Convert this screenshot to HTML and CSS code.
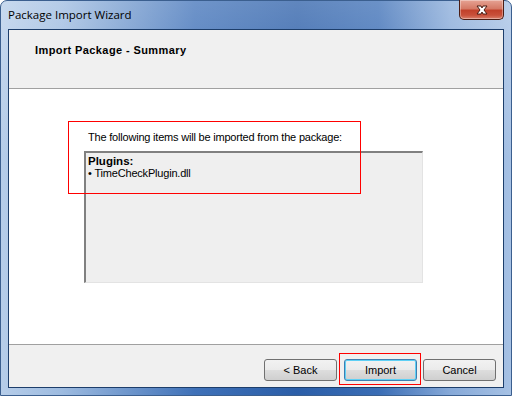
FILE: index.html
```html
<!DOCTYPE html>
<html>
  <head>
    <title>Package Import Wizard</title>
    <link rel="stylesheet" href="styles.css">
  </head>
  <body>
    <div class="window">
      <div class="title-bar">
        <span class="title-text">Package Import Wizard</span>
        <button class="close-button">
          <svg width="16" height="10" viewBox="0 0 16 10">
            <path d="M3 1 L7 1 L8 3 L9 1 L13 1 L10 5 L13 9 L9 9 L8 7 L7 9 L3 9 L6 5 Z" fill="#ffffff" stroke="#4a1a10" stroke-width="1"/>
          </svg>
        </button>
      </div>

      <div class="client">
        <div class="header">
          <p class="header-title">Import Package - Summary</p>
        </div>

        <div class="content">
          <p class="intro">The following items will be imported from the package:</p>
          <div class="list-box">
            <p class="list-group">Plugins:</p>
            <p class="list-item">&bull;&nbsp;TimeCheckPlugin.dll</p>
          </div>
          <div class="highlight highlight-list"></div>
        </div>

        <div class="footer">
          <button class="wizard-button side-button">&lt; Back</button>
          <div class="import-wrap">
            <button class="wizard-button default-button">Import</button>
          </div>
          <button class="wizard-button side-button">Cancel</button>
        </div>
      </div>
    </div>
  </body>
</html>
```

FILE: styles.css
```css
body {
    margin: 0;
    background-color: #ffffff;
    font-family: "Liberation Sans", Arial, sans-serif;
}

p {
    margin: 0;
}

.window {
    width: 512px;
    height: 396px;
    border-radius: 7px 7px 0 0;
    background:
        linear-gradient(to bottom, rgba(255, 255, 255, 0.25), rgba(255, 255, 255, 0) 40%),
        linear-gradient(to right, #b6cde9 0%, #9dbbe0 12%, #3f71b8 38%, #2b5ea8 58%, #3a6db5 74%, #86a9d8 88%, #a6c1e4 100%);
    display: flex;
    flex-direction: column;
    box-sizing: border-box;
    border: 1px solid #3b5f8f;
}

.title-bar {
    height: 28px;
    display: flex;
    align-items: flex-start;
    justify-content: space-between;
    padding-left: 7px;
}

.title-text {
    font-family: "Open Sans", "Liberation Sans", sans-serif;
    font-size: 11.5px;
    color: #000000;
    margin-top: 6px;
}

.close-button {
    width: 45px;
    height: 20px;
    margin-right: 7px;
    margin-top: -1px;
    border: 1px solid #4b1d14;
    border-top: none;
    border-radius: 0 0 5px 5px;
    background: linear-gradient(to bottom, #e6a394 0%, #d57a66 45%, #c1412b 55%, #c9503a 80%, #d9806b 100%);
    box-shadow: inset 0 0 0 1px rgba(255, 255, 255, 0.35);
    display: flex;
    align-items: center;
    justify-content: center;
    padding: 0;
}

.client {
    flex: 1;
    margin: 0 7px 7px 7px;
    border: 1px solid #1d3e6b;
    display: flex;
    flex-direction: column;
    background-color: #f0f0f0;
}

.header {
    height: 58px;
    background-color: #f0f0f0;
    border-bottom: 1px solid #a0a0a0;
    box-shadow: 0 1px 0 #ffffff;
}

.header-title {
    font-size: 11px;
    font-weight: bold;
    letter-spacing: 0.4px;
    padding: 14px 0 0 26px;
}

.content {
    flex: 1;
    position: relative;
    background-color: #ffffff;
    border-bottom: 1px solid #a0a0a0;
    padding: 41px 0 0 75px;
    margin-top: 1px;
}

.intro {
    font-size: 11px;
    letter-spacing: -0.2px;
    padding-left: 4px;
    line-height: 13px;
}

.list-box {
    width: 339px;
    height: 132px;
    margin-top: 7px;
    background-color: #efefef;
    border-left: 2px solid #808080;
    border-top: 2px solid #808080;
    border-right: 1px solid #e3e3e3;
    border-bottom: 1px solid #e3e3e3;
    padding: 2px 0 0 2px;
    box-sizing: border-box;
    font-size: 11px;
    line-height: 12px;
}

.list-group {
    font-weight: bold;
    font-size: 11.5px;
}

.list-item {
    letter-spacing: -0.2px;
}

.highlight {
    position: absolute;
    border: 1px solid #ff0000;
}

.highlight-list {
    left: 59px;
    top: 31px;
    width: 291px;
    height: 71px;
}

.footer {
    height: 42px;
    display: flex;
    justify-content: flex-end;
    align-items: flex-start;
    box-sizing: border-box;
    padding: 8px 7px 0 0;
    gap: 6px;
}

.wizard-button {
    width: 73px;
    height: 22px;
    border: 1px solid #707070;
    border-radius: 3px;
    background: linear-gradient(to bottom, #f2f2f2 0%, #ebebeb 48%, #dddddd 52%, #cfcfcf 100%);
    font-family: "Liberation Sans", Arial, sans-serif;
    font-size: 11px;
    color: #000000;
    padding: 0;
}

.side-button {
    margin-top: 6px;
}

.import-wrap {
    border: 1px solid #ff0000;
    padding: 5px 3px 3px 4px;
    margin: 0 -4px;
}

.default-button {
    border-color: #3c7fb1;
    box-shadow: inset 0 0 0 1px #5fd0f5;
}
```
